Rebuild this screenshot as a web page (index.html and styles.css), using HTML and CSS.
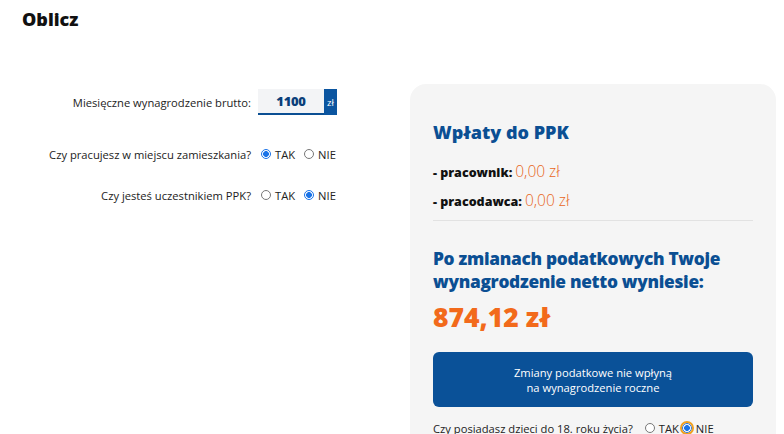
FILE: index.html
```html
<!DOCTYPE html>
<html lang="pl">
<head>
<meta charset="utf-8">
<link rel="stylesheet" href="styles.css">
</head>
<body>
<h1 class="title">Oblicz</h1>
<div class="layout">
  <div class="form">
    <div class="row row-salary">
      <div class="label">Miesięczne wynagrodzenie brutto:</div>
      <div class="control">
        <div class="amount"><span class="amount-value">1100</span><span class="amount-unit">zł</span></div>
      </div>
    </div>
    <div class="row row-place">
      <div class="label">Czy pracujesz w miejscu zamieszkania?</div>
      <div class="control">
        <span class="radio checked"></span><span class="opt">TAK</span>
        <span class="radio"></span><span class="opt">NIE</span>
      </div>
    </div>
    <div class="row row-ppk">
      <div class="label">Czy jesteś uczestnikiem PPK?</div>
      <div class="control">
        <span class="radio"></span><span class="opt">TAK</span>
        <span class="radio checked"></span><span class="opt">NIE</span>
      </div>
    </div>
  </div>
  <div class="panel">
    <h2 class="panel-title">Wpłaty do PPK</h2>
    <div class="line first"><b>- pracownik:</b> <span class="val">0,00 zł</span></div>
    <div class="line"><b>- pracodawca:</b> <span class="val">0,00 zł</span></div>
    <hr class="divider">
    <h2 class="result-title">Po zmianach podatkowych Twoje wynagrodzenie netto wyniesie:</h2>
    <div class="result">874,12 zł</div>
    <div class="notice">Zmiany podatkowe nie wpłyną<br>na wynagrodzenie roczne</div>
    <div class="kids">
      <span class="kids-label">Czy posiadasz dzieci do 18. roku życia?</span>
      <span class="radio"></span><span class="opt tight">TAK</span>
      <span class="radio checked focus"></span><span class="opt">NIE</span>
    </div>
  </div>
</div>
</body>
</html>
```
FILE: styles.css
```css
html, body { margin: 0; padding: 0; background: #fff; }
body {
  font-family: "Open Sans", "Liberation Sans", sans-serif;
  font-size: 11.2px;
  color: #222;
  width: 784px;
  height: 434px;
  overflow: hidden;
}
.title {
  margin: 0;
  padding: 6px 0 0 22px;
  height: 26px;
  font-family: "Open Sans", sans-serif;
  font-weight: 800;
  font-size: 18px;
  color: #111;
  line-height: 26px;
}
.layout {
  display: flex;
  margin-top: 52px;
}
.form {
  width: 410px;
  padding-top: 5px;
  display: flex;
  flex-direction: column;
}
.row {
  display: flex;
  align-items: center;
  height: 26px;
}
.row-place { margin-top: 26px; }
.row-ppk { margin-top: 15px; }
.label {
  width: 251px;
  margin-right: 7px;
  text-align: right;
  color: #222;
}
.control {
  display: flex;
  align-items: center;
  height: 26px;
}
.amount {
  display: flex;
  height: 26px;
}
.amount-value {
  width: 66px;
  background: #f3f4f6;
  border-bottom: 2px solid #0b4f93;
  box-sizing: border-box;
  display: flex;
  align-items: center;
  justify-content: center;
  font-family: "Open Sans", sans-serif;
  font-weight: 800;
  font-size: 13px;
  letter-spacing: -0.3px;
  color: #0b3f7a;
}
.amount-unit {
  width: 13px;
  background: #0b55a0;
  color: #fff;
  font-size: 9.5px;
  display: flex;
  align-items: center;
  justify-content: center;
}
.radio {
  width: 8px;
  height: 8px;
  border: 1px solid #777;
  border-radius: 50%;
  margin: 0 4px 0 3px;
  background: #fff;
  flex: none;
}
.radio.checked {
  border-color: #1a73e8;
  background: radial-gradient(circle, #1a73e8 0 2.6px, #fff 3.2px);
}
.radio.focus {
  outline: 2px solid #f0a020;
  outline-offset: 0;
  margin-left: 2px;
}
.opt { margin-right: 6px; color: #222; }
.opt.tight { margin-right: 1px; }
.panel {
  width: 366px;
  box-sizing: border-box;
  background: #f5f5f5;
  border-radius: 16px 16px 0 0;
  padding: 36px 23px 0 23px;
  height: 350px;
  overflow: hidden;
}
.panel-title {
  margin: 0;
  font-family: "Open Sans", sans-serif;
  font-weight: 800;
  font-size: 18px;
  color: #0b4f93;
  line-height: 24px;
}
.line {
  line-height: 20px;
  height: 20px;
  margin-top: 9px;
}
.line.first { margin-top: 17px; }
.line b {
  font-family: "Open Sans", sans-serif;
  font-weight: 800;
  font-size: 12.5px;
  color: #111;
}
.val {
  font-family: "Open Sans", sans-serif;
  font-weight: 300;
  font-size: 15.5px;
  color: #e8661c;
}
.divider {
  margin: 10px 0 0 0;
  border: 0;
  border-top: 1px solid #e2e2e2;
  height: 0;
}
.result-title {
  margin: 26px 0 0 0;
  font-family: "Open Sans", sans-serif;
  font-weight: 800;
  font-size: 17.3px;
  letter-spacing: -0.3px;
  line-height: 23px;
  color: #0b4f93;
}
.result {
  margin-top: 8px;
  font-family: "Open Sans", sans-serif;
  font-weight: 800;
  font-size: 26.5px;
  line-height: 32px;
  color: #f26a1b;
}
.notice {
  margin-top: 19px;
  height: 55px;
  background: #0a5198;
  border-radius: 6px;
  color: #fff;
  display: flex;
  align-items: center;
  justify-content: center;
  text-align: center;
  font-size: 11.2px;
  line-height: 15px;
}
.kids {
  margin-top: 11px;
  display: flex;
  align-items: center;
  height: 20px;
  font-size: 11.2px;
}
.kids-label { margin-right: 9px; }
```
